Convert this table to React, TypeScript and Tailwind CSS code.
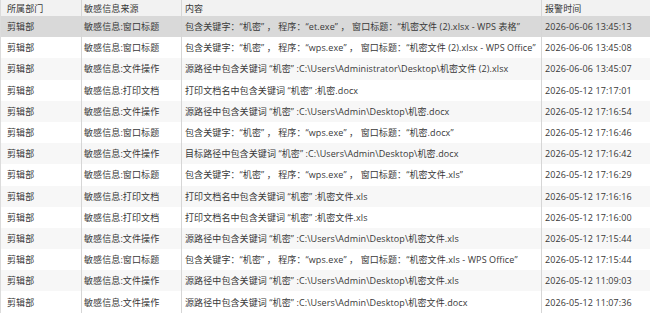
import React from "react";

type Row = { dept: string; src: string; content: string; time: string };

const rows: Row[] = [
  { dept: "剪辑部", src: "敏感信息:窗口标题", content: "包含关键字：“机密” ， 程序：“et.exe” ， 窗口标题：“机密文件 (2).xlsx - WPS 表格”", time: "2026-06-06 13:45:13" },
  { dept: "剪辑部", src: "敏感信息:窗口标题", content: "包含关键字：“机密” ， 程序：“wps.exe” ， 窗口标题：“机密文件 (2).xlsx - WPS Office”", time: "2026-06-06 13:45:08" },
  { dept: "剪辑部", src: "敏感信息:文件操作", content: "源路径中包含关键词 “机密” :C:\\Users\\Administrator\\Desktop\\机密文件 (2).xlsx", time: "2026-06-06 13:45:07" },
  { dept: "剪辑部", src: "敏感信息:打印文档", content: "打印文档名中包含关键词 “机密” :机密.docx", time: "2026-05-12 17:17:01" },
  { dept: "剪辑部", src: "敏感信息:文件操作", content: "源路径中包含关键词 “机密” :C:\\Users\\Admin\\Desktop\\机密.docx", time: "2026-05-12 17:16:54" },
  { dept: "剪辑部", src: "敏感信息:窗口标题", content: "包含关键字：“机密” ， 程序：“wps.exe” ， 窗口标题：“机密.docx”", time: "2026-05-12 17:16:46" },
  { dept: "剪辑部", src: "敏感信息:文件操作", content: "目标路径中包含关键词 “机密” :C:\\Users\\Admin\\Desktop\\机密.docx", time: "2026-05-12 17:16:42" },
  { dept: "剪辑部", src: "敏感信息:窗口标题", content: "包含关键字：“机密” ， 程序：“wps.exe” ， 窗口标题：“机密文件.xls”", time: "2026-05-12 17:16:29" },
  { dept: "剪辑部", src: "敏感信息:打印文档", content: "打印文档名中包含关键词 “机密” :机密文件.xls", time: "2026-05-12 17:16:16" },
  { dept: "剪辑部", src: "敏感信息:打印文档", content: "打印文档名中包含关键词 “机密” :机密文件.xls", time: "2026-05-12 17:16:00" },
  { dept: "剪辑部", src: "敏感信息:文件操作", content: "源路径中包含关键词 “机密” :C:\\Users\\Admin\\Desktop\\机密文件.xls", time: "2026-05-12 17:15:44" },
  { dept: "剪辑部", src: "敏感信息:窗口标题", content: "包含关键字：“机密” ， 程序：“wps.exe” ， 窗口标题：“机密文件.xls - WPS Office”", time: "2026-05-12 17:15:44" },
  { dept: "剪辑部", src: "敏感信息:文件操作", content: "源路径中包含关键词 “机密” :C:\\Users\\Admin\\Desktop\\机密文件.xls", time: "2026-05-12 11:09:03" },
  { dept: "剪辑部", src: "敏感信息:文件操作", content: "源路径中包含关键词 “机密” :C:\\Users\\Admin\\Desktop\\机密文件.docx", time: "2026-05-12 11:07:36" },
];

export default function App() {
  return (
    <div className="w-[650px] h-[316px] overflow-hidden bg-white font-['Open_Sans','Noto_Sans_CJK_SC',sans-serif] text-[9px] tracking-[0.1px] text-[#383838] leading-none">
      <div className="flex h-[16px] bg-[#f2f2f2] border-l border-[#dcdcdc]">
        <div className="w-[81px] shrink-0 flex items-center pl-[6px] border-r border-[#d6d6d6]">所属部门</div>
        <div className="w-[100px] shrink-0 flex items-center pl-[2px] border-r border-[#d6d6d6]">敏感信息来源</div>
        <div className="w-[360px] shrink-0 flex items-center pl-[3px] border-r border-[#d6d6d6]">内容</div>
        <div className="flex-1 flex items-center pl-[3px]">报警时间</div>
      </div>
      {rows.map((r, i) => (
        <div
          key={i}
          className={
            "flex h-[21.2px] border-l border-[#dcdcdc] " +
            (i === 0 ? "bg-[#d9d9d9]" : i % 2 === 1 ? "bg-white" : "bg-[#f7f7f7]")
          }
        >
          <div className="w-[81px] shrink-0 flex items-center pl-[6px] border-r border-[#d6d6d6] whitespace-nowrap">{r.dept}</div>
          <div className="w-[100px] shrink-0 flex items-center pl-[2px] border-r border-[#d6d6d6] whitespace-nowrap">{r.src}</div>
          <div className="w-[360px] shrink-0 flex items-center pl-[3px] border-r border-[#d6d6d6] whitespace-nowrap overflow-hidden">{r.content}</div>
          <div className="flex-1 flex items-center pl-[3px] whitespace-nowrap">{r.time}</div>
        </div>
      ))}
    </div>
  );
}
